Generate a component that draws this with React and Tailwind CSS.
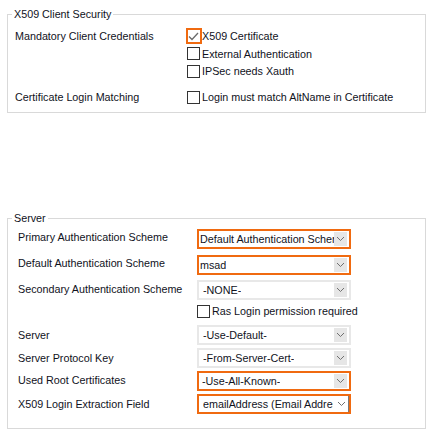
import React from "react";

function Box({ checked }) {
  if (checked) {
    return (
      <span className="-m-[1.5px] flex h-[16px] w-[16px] shrink-0 items-center justify-center border-2 border-[#f06a10] bg-white">
        <svg width="11" height="9" viewBox="0 0 11 9">
          <path d="M1 4.5 L4 7.5 L10 1" fill="none" stroke="#6b6b6b" strokeWidth="1.3" />
        </svg>
      </span>
    );
  }
  return <span className="h-[13px] w-[13px] shrink-0 border border-[#333] bg-white" />;
}

function Check({ label, checked }) {
  return (
    <div className="flex items-center gap-[2px]">
      <Box checked={checked} />
      <span>{label}</span>
    </div>
  );
}

function Chevron() {
  return (
    <svg width="9" height="6" viewBox="0 0 9 6">
      <path d="M1 1 L4.5 4.5 L8 1" fill="none" stroke="#707070" strokeWidth="1" />
    </svg>
  );
}

function Select({ value, hl, focus, pl = "pl-[4px]" }) {
  const border = hl ? "border-[#f06a10]" : "border-[#e8e8e8]";
  return (
    <div className={`flex h-[20px] w-[154px] items-stretch border-2 bg-white ${border}`}>
      <div
        className={`flex flex-1 items-center overflow-hidden whitespace-nowrap ${pl} ${
          focus ? "border-r border-[#7a7a7a]" : ""
        }`}
      >
        <span className="overflow-hidden">{value}</span>
        {focus ? (
          <span className="ml-auto flex w-[15px] shrink-0 items-center justify-center bg-white pl-[2px]">
            <Chevron />
          </span>
        ) : (
          <span className="my-[1px] mr-[2px] ml-auto flex w-[13px] shrink-0 items-center justify-center self-stretch bg-[#e6e6e6]">
            <Chevron />
          </span>
        )}
      </div>
    </div>
  );
}

function Row({ label, children, className = "", labelClass = "" }) {
  return (
    <div className={`flex items-center ${className}`}>
      <div className={`w-[179px] shrink-0 ${labelClass}`}>{label}</div>
      {children}
    </div>
  );
}

export default function App() {
  return (
    <div className="h-[434px] w-[433px] bg-white px-[7px] font-['Liberation_Sans',Arial,sans-serif] text-[10.75px] leading-[14px] text-[#10121c]">
      {/* X509 Client Security */}
      <fieldset className="mt-[7px] border border-[#d9d9d9]">
        <legend className="ml-[4px] px-[2px]">X509 Client Security</legend>
        <div className="pt-[6px] pb-[6px] pl-[7px]">
          <div className="flex h-[18px] items-center">
            <div className="w-[172px] shrink-0">Mandatory Client Credentials</div>
            <Check label="X509 Certificate" checked />
          </div>
          <div className="flex h-[17px] items-center">
            <div className="w-[172px] shrink-0" />
            <Check label="External Authentication" />
          </div>
          <div className="flex h-[18px] items-center">
            <div className="w-[172px] shrink-0" />
            <Check label="IPSec needs Xauth" />
          </div>
          <div className="mt-[8px] flex h-[18px] items-center">
            <div className="w-[172px] shrink-0">Certificate Login Matching</div>
            <Check label="Login must match AltName in Certificate" />
          </div>
        </div>
      </fieldset>

      {/* Server */}
      <fieldset className="mt-[98px] border border-[#d9d9d9]">
        <legend className="ml-[4px] px-[2px]">Server</legend>
        <div className="pt-[4px] pb-[14px] pl-[10px]">
          <Row label="Primary Authentication Scheme" labelClass="-mt-[5px]">
            <Select value="Default Authentication Scheme" hl pl="pl-[1px]" />
          </Row>
          <Row label="Default Authentication Scheme" className="mt-[6px]" labelClass="-mt-[5px]">
            <Select value="msad" hl pl="pl-[1px]" />
          </Row>
          <Row label="Secondary Authentication Scheme" className="mt-[5px]" labelClass="-mt-[3px]">
            <Select value="-NONE-" />
          </Row>
          <Row className="mt-[4px]">
            <Check label="Ras Login permission required" />
          </Row>
          <Row label="Server" className="mt-[7px]">
            <Select value="-Use-Default-" />
          </Row>
          <Row label="Server Protocol Key" className="mt-[3px]">
            <Select value="-From-Server-Cert-" />
          </Row>
          <Row label="Used Root Certificates" className="mt-[3px]" labelClass="-mt-[2px]">
            <Select value="-Use-All-Known-" hl pl="pl-[3px]" />
          </Row>
          <Row label="X509 Login Extraction Field" className="mt-[3px]">
            <Select value="emailAddress (Email Address)" hl focus pl="pl-[4px]" />
          </Row>
        </div>
      </fieldset>
    </div>
  );
}
